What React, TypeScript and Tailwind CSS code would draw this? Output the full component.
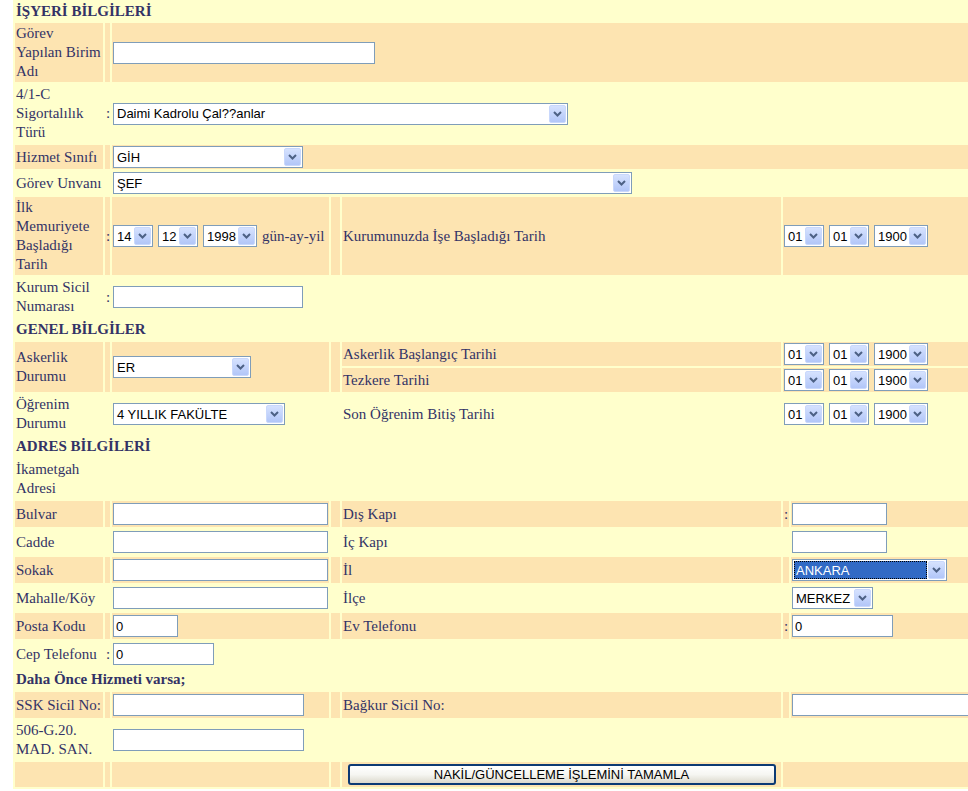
import React from 'react'

// orange row: every cell gets the tan fill, spacing stays yellow
const ORANGE = '[&>td]:bg-[#fde4b1]'

function Chevron() {
  return (
    <svg width="9" height="6" viewBox="0 0 9 6" className="block">
      <path d="M1 1 L4.5 4.5 L8 1" fill="none" stroke="#4d6185" strokeWidth="2" />
    </svg>
  )
}

function Sel({ value, className = '', active = false }: { value: string; className?: string; active?: boolean }) {
  return (
    <span
      className={`inline-flex h-[22px] shrink-0 items-center border border-[#7f9db9] bg-white align-middle font-['Liberation_Sans',Arial,sans-serif] text-[13px] leading-none ${className}`}
    >
      <span className="flex h-full min-w-0 flex-1 items-center p-px">
        <span
          className={`flex h-full w-full items-center whitespace-nowrap pl-[2px] ${
            active ? 'bg-[#316ac5] text-white outline-1 outline-dotted outline-black -outline-offset-1' : 'text-black'
          }`}
        >
          {value}
        </span>
      </span>
      <span className="mr-px flex h-[18px] w-[17px] shrink-0 items-center justify-center rounded-[2px] border border-[#c9d8fc] bg-linear-to-b from-[#d6e2fe] to-[#b2c6f8]">
        <Chevron />
      </span>
    </span>
  )
}

function Inp({ className = '', value = '' }: { className?: string; value?: string }) {
  return (
    <input
      readOnly
      value={value}
      className={`block h-[22px] border border-[#7f9db9] bg-white px-[2px] font-['Liberation_Sans',Arial,sans-serif] text-[13px] text-black outline-none ${className}`}
    />
  )
}

function Dates({ d, m, y }: { d: string; m: string; y: string }) {
  return (
    <div className="flex items-center gap-[5px]">
      <Sel value={d} className="w-[40px]" />
      <Sel value={m} className="w-[40px]" />
      <Sel value={y} className="w-[54px]" />
    </div>
  )
}

export default function App() {
  return (
    <div className="w-[968px] overflow-hidden bg-white">
      <table className="ml-[13px] w-[982px] table-fixed border-separate border-spacing-[2px] bg-[#ffffcc] font-['Liberation_Serif','Times_New_Roman',serif] text-[15px] leading-[19px] text-[#333366] [&_td]:p-px [&_td]:align-middle">
        <colgroup>
          <col className="w-[88px]" />
          <col className="w-[5px]" />
          <col className="w-[217px]" />
          <col className="w-[9px]" />
          <col className="w-[439px]" />
          <col className="w-[6px]" />
          <col className="w-[202px]" />
        </colgroup>
        <tbody>
          <tr className="h-[19px]">
            <td colSpan={7} className="py-0! font-bold">İŞYERİ BİLGİLERİ</td>
          </tr>
          <tr className={`h-[59px] ${ORANGE}`}>
            <td className="whitespace-nowrap">Görev<br />Yapılan Birim<br />Adı</td>
            <td></td>
            <td colSpan={5}><Inp className="w-[262px]" /></td>
          </tr>
          <tr className="h-[59px]">
            <td className="whitespace-nowrap">4/1-C<br />Sigortalılık<br />Türü</td>
            <td>:</td>
            <td colSpan={5}><Sel value="Daimi Kadrolu Çal??anlar" className="w-[455px]" /></td>
          </tr>
          <tr className={`h-[24px] ${ORANGE}`}>
            <td className="whitespace-nowrap">Hizmet Sınıfı</td>
            <td></td>
            <td colSpan={5}><Sel value="GİH" className="w-[190px]" /></td>
          </tr>
          <tr className="h-[24px]">
            <td className="whitespace-nowrap">Görev Unvanı</td>
            <td></td>
            <td colSpan={5}><Sel value="ŞEF" className="w-[519px]" /></td>
          </tr>
          <tr className={`h-[78px] ${ORANGE}`}>
            <td className="whitespace-nowrap">İlk<br />Memuriyete<br />Başladığı<br />Tarih</td>
            <td>:</td>
            <td>
              <div className="flex items-center gap-[5px]">
                <Sel value="14" className="w-[40px]" />
                <Sel value="12" className="w-[40px]" />
                <Sel value="1998" className="w-[54px]" />
                <span className="whitespace-nowrap">gün-ay-yil</span>
              </div>
            </td>
            <td></td>
            <td>Kurumunuzda İşe Başladığı Tarih</td>
            <td colSpan={2}><Dates d="01" m="01" y="1900" /></td>
          </tr>
          <tr className="h-[40px]">
            <td className="whitespace-nowrap">Kurum Sicil<br />Numarası</td>
            <td>:</td>
            <td colSpan={5}><Inp className="w-[190px]" /></td>
          </tr>
          <tr className="h-[21px]">
            <td colSpan={7} className="font-bold">GENEL BİLGİLER</td>
          </tr>
          <tr className={`h-[24px] ${ORANGE}`}>
            <td rowSpan={2} className="whitespace-nowrap">Askerlik<br />Durumu</td>
            <td rowSpan={2}></td>
            <td rowSpan={2}><Sel value="ER" className="w-[138px]" /></td>
            <td rowSpan={2}></td>
            <td>Askerlik Başlangıç Tarihi</td>
            <td colSpan={2}><Dates d="01" m="01" y="1900" /></td>
          </tr>
          <tr className={`h-[24px] ${ORANGE}`}>
            <td>Tezkere Tarihi</td>
            <td colSpan={2}><Dates d="01" m="01" y="1900" /></td>
          </tr>
          <tr className="h-[40px]">
            <td className="whitespace-nowrap">Öğrenim<br />Durumu</td>
            <td></td>
            <td><Sel value="4 YILLIK FAKÜLTE" className="w-[172px]" /></td>
            <td></td>
            <td>Son Öğrenim Bitiş Tarihi</td>
            <td colSpan={2}><Dates d="01" m="01" y="1900" /></td>
          </tr>
          <tr className="h-[21px]">
            <td colSpan={7} className="font-bold">ADRES BİLGİLERİ</td>
          </tr>
          <tr className="h-[40px]">
            <td className="whitespace-nowrap">İkametgah<br />Adresi</td>
            <td colSpan={6}></td>
          </tr>
          <tr className={`h-[26px] ${ORANGE}`}>
            <td>Bulvar</td>
            <td></td>
            <td><Inp className="w-[215px]" /></td>
            <td></td>
            <td>Dış Kapı</td>
            <td>:</td>
            <td><Inp className="w-[95px]" /></td>
          </tr>
          <tr className="h-[26px]">
            <td>Cadde</td>
            <td></td>
            <td><Inp className="w-[215px]" /></td>
            <td></td>
            <td>İç Kapı</td>
            <td></td>
            <td><Inp className="w-[95px]" /></td>
          </tr>
          <tr className={`h-[26px] ${ORANGE}`}>
            <td>Sokak</td>
            <td></td>
            <td><Inp className="w-[215px]" /></td>
            <td></td>
            <td>İl</td>
            <td></td>
            <td><Sel value="ANKARA" className="w-[155px]" active /></td>
          </tr>
          <tr className="h-[26px]">
            <td className="whitespace-nowrap">Mahalle/Köy</td>
            <td></td>
            <td><Inp className="w-[215px]" /></td>
            <td></td>
            <td>İlçe</td>
            <td></td>
            <td><Sel value="MERKEZ" className="w-[81px]" /></td>
          </tr>
          <tr className={`h-[26px] ${ORANGE}`}>
            <td className="whitespace-nowrap">Posta Kodu</td>
            <td></td>
            <td><Inp className="w-[65px]" value="0" /></td>
            <td></td>
            <td>Ev Telefonu</td>
            <td>:</td>
            <td><Inp className="w-[101px]" value="0" /></td>
          </tr>
          <tr className="h-[26px]">
            <td className="whitespace-nowrap">Cep Telefonu</td>
            <td>:</td>
            <td><Inp className="w-[101px]" value="0" /></td>
            <td colSpan={4}></td>
          </tr>
          <tr className="h-[21px]">
            <td colSpan={7} className="font-bold">Daha Önce Hizmeti varsa;</td>
          </tr>
          <tr className={`h-[26px] ${ORANGE}`}>
            <td className="whitespace-nowrap">SSK Sicil No:</td>
            <td></td>
            <td><Inp className="w-[191px]" /></td>
            <td></td>
            <td>Bağkur Sicil No:</td>
            <td></td>
            <td><Inp className="w-[200px]" /></td>
          </tr>
          <tr className="h-[40px]">
            <td className="whitespace-nowrap">506-G.20.<br />MAD. SAN.</td>
            <td></td>
            <td><Inp className="w-[191px]" /></td>
            <td colSpan={4}></td>
          </tr>
          <tr className={`h-[25px] ${ORANGE}`}>
            <td></td>
            <td></td>
            <td></td>
            <td></td>
            <td>
              <button
                type="button"
                className="mx-auto block h-[21px] w-[428px] rounded-[3px] border-2 border-[#0c3a74] bg-linear-to-b from-white via-[#f6f6f2] to-[#dcd9cd] font-['Liberation_Sans',Arial,sans-serif] text-[13px] leading-none text-black"
              >
                NAKİL/GÜNCELLEME İŞLEMİNİ TAMAMLA
              </button>
            </td>
            <td colSpan={2}></td>
          </tr>
        </tbody>
      </table>
    </div>
  )
}
